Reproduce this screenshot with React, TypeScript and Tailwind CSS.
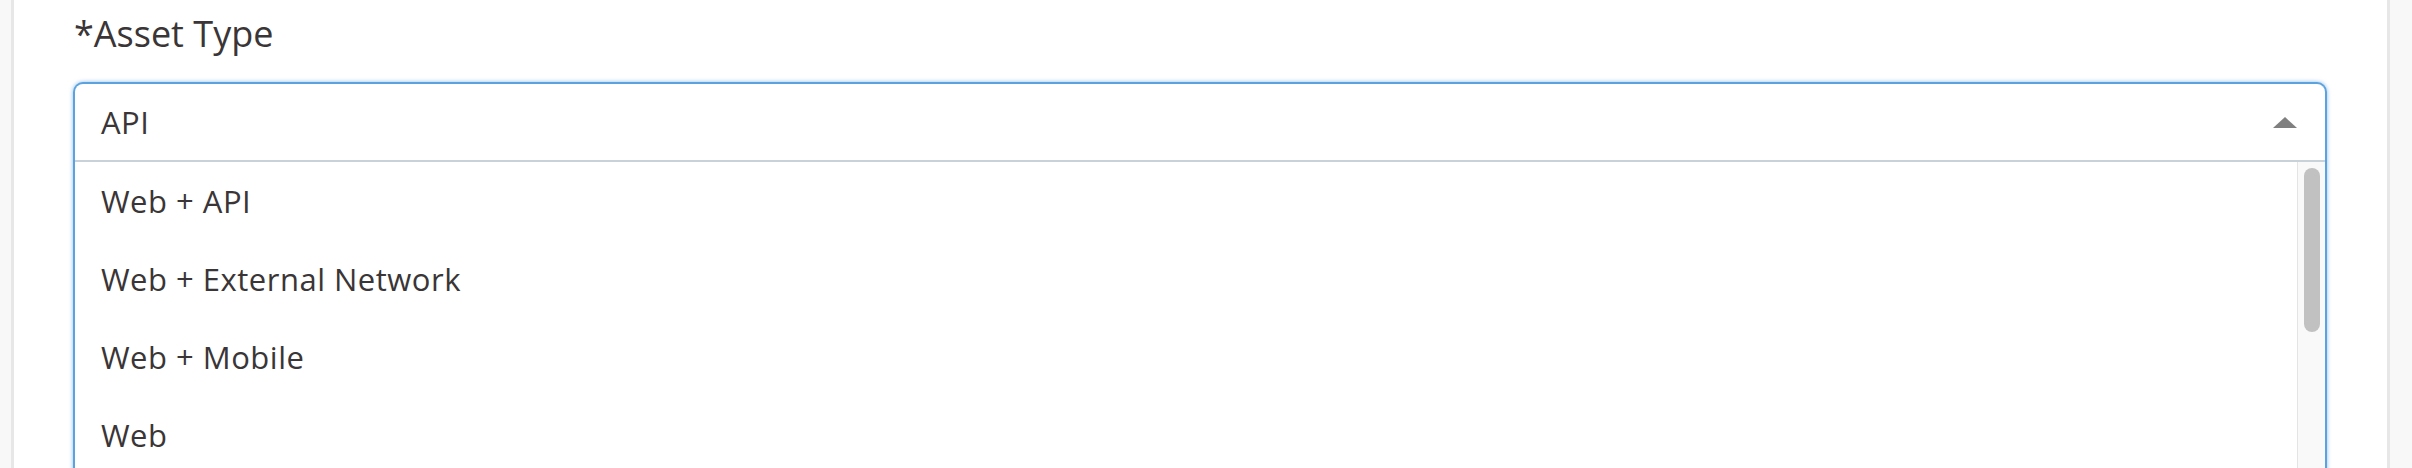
import React from "react";

const options = ["Web + API", "Web + External Network", "Web + Mobile", "Web"];

export default function App() {
  return (
    <div className="flex w-[2412px] h-[468px] overflow-hidden bg-[#f8f8f8] font-['Open_Sans',sans-serif] text-[#3a3536]">
      <div className="w-[11px] shrink-0 bg-[#f8f8f8]" />
      <div className="flex-1 flex flex-col bg-white border-l-[3px] border-r-[3px] border-[#e7e7e7] pl-[59px] pr-[60px]">
        <div className="pt-[16px] pl-[1px] text-[36px] leading-[36px]">*Asset Type</div>
        <div className="mt-[30px] h-[600px] shrink-0 rounded-t-[10px] border-2 border-b-0 border-[#5ba2de] shadow-[0_0_4px_rgba(91,162,222,0.7)] bg-white flex flex-col">
          <div className="h-[76px] flex items-center justify-between pl-[26px] pr-[28px] text-[31px] tracking-[0.5px]">
            <span>API</span>
            <svg width="24" height="11" viewBox="0 0 24 11" className="block">
              <polygon points="12,0 24,11 0,11" fill="#7f7f7f" />
            </svg>
          </div>
          <div className="h-[2px] bg-[#c9d1d9]" />
          <div className="flex flex-1">
            <div className="flex-1 flex flex-col">
              {options.map((o) => (
                <div key={o} className="h-[78px] flex items-center pl-[26px] text-[31px] tracking-[0.5px]">
                  {o}
                </div>
              ))}
            </div>
            <div className="w-[28px] shrink-0 bg-[#f9f9f9] border-l border-[#e4e4e4] pt-[6px] pl-[6px]">
              <div className="w-[16px] h-[164px] rounded-full bg-[#c1c1c1]" />
            </div>
          </div>
        </div>
      </div>
      <div className="w-[22px] shrink-0 bg-[#f8f8f8]" />
    </div>
  );
}
